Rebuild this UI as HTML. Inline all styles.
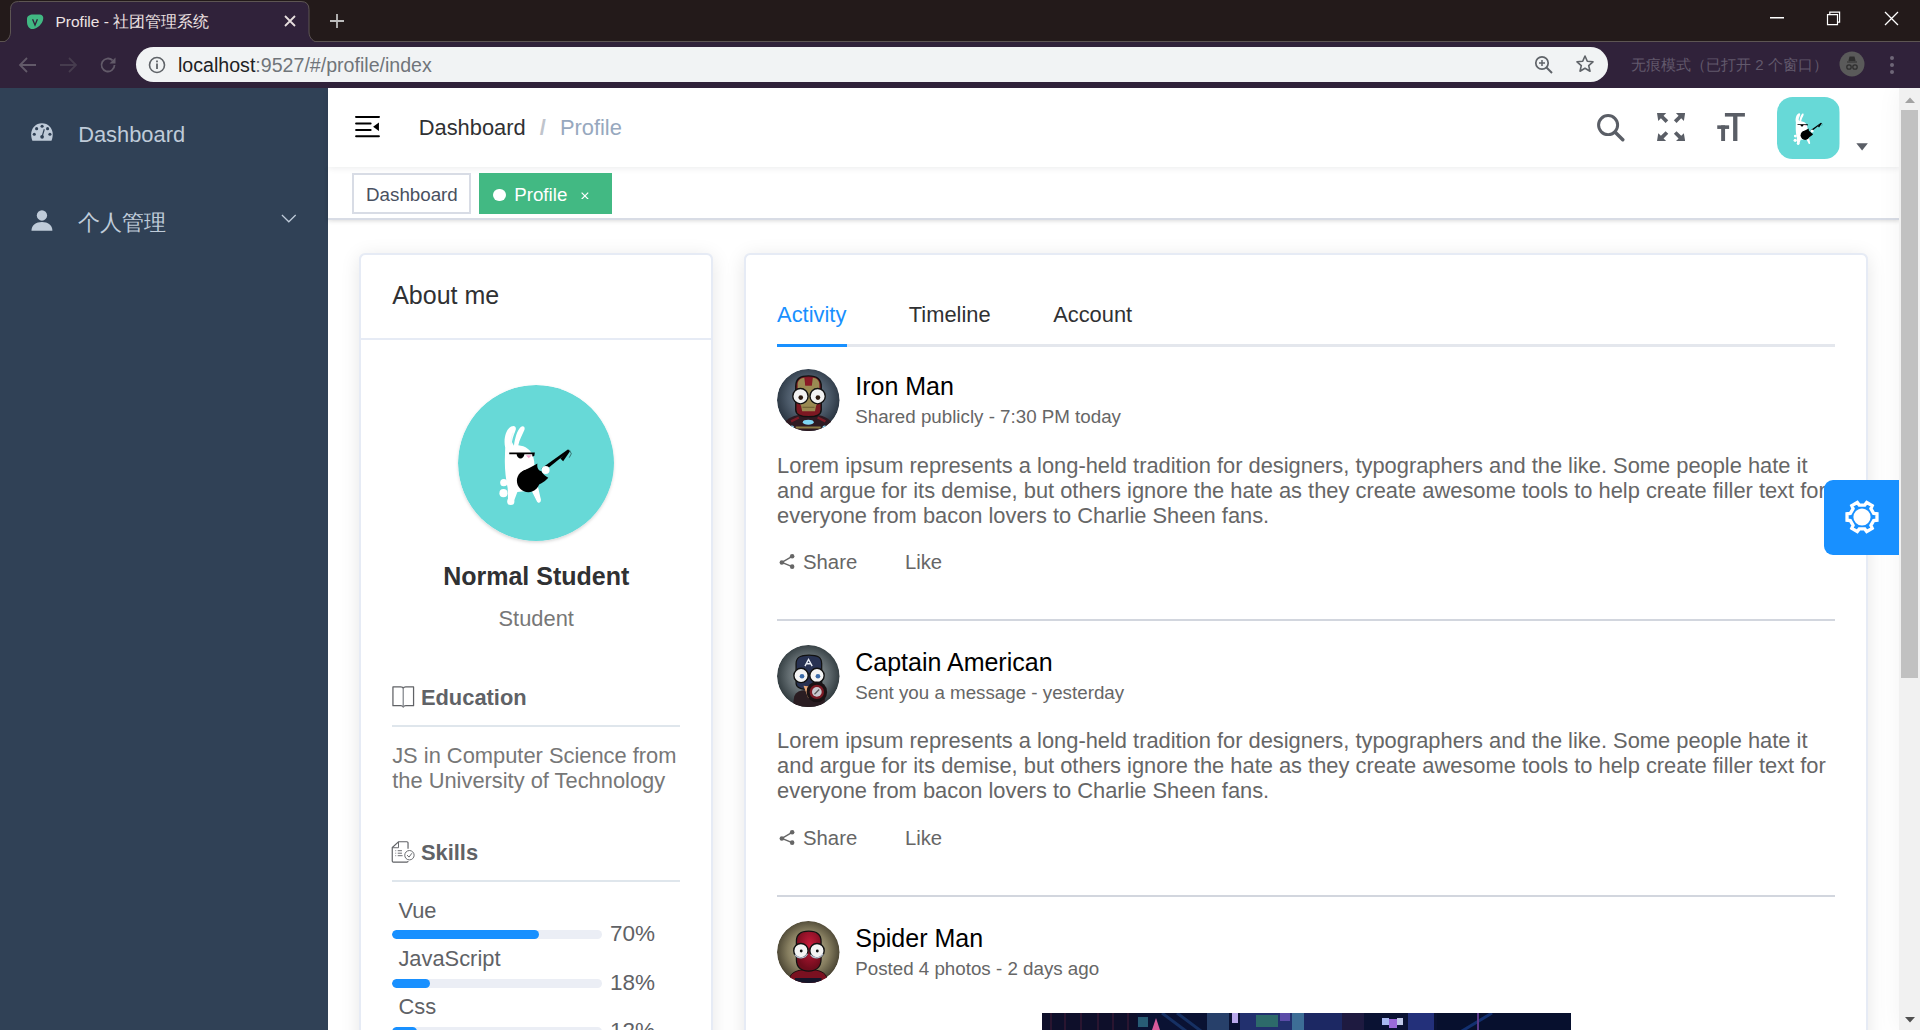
<!DOCTYPE html>
<html><head><meta charset="utf-8">
<style>
*{box-sizing:border-box;margin:0;padding:0}
html,body{width:1920px;height:1030px;overflow:hidden;background:#fff;font-family:"Liberation Sans",sans-serif}
.abs{position:absolute}
/* browser chrome */
#titlebar{position:absolute;left:0;top:0;width:1920px;height:42px;background:#231a1a;border-bottom:1px solid #5d5553}
#tab{position:absolute;left:10px;top:1px;width:298px;height:41px}
#tab .title{position:absolute;left:45.5px;top:11px;font-size:15.5px;color:#eee3e3;white-space:nowrap}
#toolbar{position:absolute;left:0;top:42px;width:1920px;height:46px;background:#30223a}
#omni{position:absolute;left:136px;top:5px;width:1472px;height:35px;background:#f1f3f4;border-radius:18px}
#omni .url{position:absolute;left:42px;top:6.5px;font-size:19.6px;color:#202124;white-space:nowrap;letter-spacing:0}
#omni .url span{color:#70757a}
#incog{position:absolute;left:1631px;top:13.5px;font-size:15px;color:#62596c;white-space:nowrap}
/* page */
#page{position:absolute;left:0;top:88px;width:1920px;height:942px;overflow:hidden;background:#fff}
#app{zoom:1.5625;width:1216px;height:603px;position:relative}
.sidebar{position:absolute;left:0;top:0;width:210px;height:100%;background:#304156}
.menu-item{position:relative;height:56px;line-height:59.6px;font-size:14px;color:#bfcbd9;padding-left:50px;white-space:nowrap}
.main{position:absolute;left:210px;top:0;right:0;height:100%}
.navbar{height:50.6px;position:relative;background:#fff;box-shadow:0 1px 4px rgba(0,21,41,.08)}
.tags{height:33.9px;background:#fff;border-bottom:1.28px solid #d8dce5;box-shadow:0 1px 3px 0 rgba(0,0,0,.12),0 0 3px 0 rgba(0,0,0,.04)}
.tag{display:inline-block;position:relative;height:26px;line-height:26px;border:1.3px solid #d8dce5;color:#495060;background:#fff;padding:0 8px;font-size:12px;margin-left:5px;margin-top:4px;vertical-align:top}
.tag:first-of-type{margin-left:15px;padding-right:7.2px}
.tag.active{background:#42b983;color:#fff;border-color:#42b983}
.tag.active::after{content:none}
.tag.active::before{content:"";background:#fff;display:inline-block;width:8px;height:8px;border-radius:50%;position:relative;margin-right:2px}
.scrollbar{position:absolute;left:1899px;top:0;width:21px;height:942px;background:#f1f1f1}

.sico{position:absolute;left:20px}
.breadcrumb{position:absolute;left:58px;top:0.6px;line-height:50px;font-size:14px;white-space:nowrap}
.bc1{color:#303133}
.bcsep{margin:0 9px;font-weight:700;color:#c0c4cc}
.bc2{color:#97a8be}
.uavatar{position:absolute;left:927.4px;top:5.7px;width:40px;height:40px;border-radius:10px;overflow:hidden}
.uavatar svg{display:block}
.tclose{display:inline-block;width:16px;height:1px;vertical-align:baseline;position:relative}
.tclose svg{position:absolute;left:5.4px;top:-5.2px}
.app-main{position:relative;padding:20px;height:519px;overflow:hidden;top:1.1px}
.col6{position:absolute;left:20px;top:20px;width:226.34px}
.col18{position:absolute;left:266.34px;top:20px;width:719.02px}
.card{border:1.28px solid #e6ebf5;background:#fff;border-radius:4px;overflow:hidden;color:#303133;box-shadow:0 2px 12px 0 rgba(0,0,0,.1);height:900px;font-size:16px}
.card-header{padding:16.8px 19.72px 18px;border-bottom:1.28px solid #e6ebf5}
.card-body{padding:20px 19.72px}
.user-profile{text-align:center}
.pan{width:100px;height:100px;margin:8.7px auto 0;border-radius:50%;overflow:hidden;box-shadow:0 1px 2px rgba(0,0,0,.15)}
.pan svg{display:block}
.user-name{padding-top:13.2px;font-weight:bold}
.user-role{padding-top:9.4px;font-size:14px;color:#777}
.user-bio{margin-top:20px;color:#606266}
.bio-section{font-size:14px;padding:15px 0;line-height:16px}
.bio-header{border-bottom:1.28px solid #dfe6ec;padding-bottom:10px;margin-bottom:10px;font-weight:bold;position:relative}
.bio-header span{padding-left:4px}
.bicon{vertical-align:-2px;position:relative;top:-1.3px}
.text-muted{color:#777}
.edu{margin-top:-0.8px;padding-bottom:0.8px;margin-bottom:-1.2px}
.progress-item{margin-bottom:0;font-size:14px}
.progress-item span{padding-left:4px}
.prog{position:relative;line-height:1;white-space:nowrap}
.prog .bar{display:inline-block;vertical-align:middle;width:100%;padding-right:50px;margin-right:-55px;box-sizing:border-box}
.prog .bar::before{content:none}
.prog .outer{}
.prog .inner{height:6px;border-radius:100px;background:#1890ff}
.prog .outer{height:6px;border-radius:100px;background:#ebeef5;overflow:hidden;position:relative}
.ptext{display:inline-block;vertical-align:middle;font-size:14.4px;color:#606266;margin-left:10px;line-height:1}
.tabs{position:relative;height:40px;margin-bottom:14px}
.tabi{display:inline-block;height:40px;line-height:40px;font-size:14px;font-weight:500;color:#303133;padding:0 20px;vertical-align:top}
.tabi:first-child{padding-left:0}
.tabi.active{color:#1890ff}
.tabline{position:absolute;left:0;right:0;bottom:0;height:2px;background:#e4e7ed}
.tabbar{position:absolute;left:0;bottom:0;height:2px;width:45px;background:#1890ff}
.post{font-size:14px;border-bottom:1.28px solid #d2d6de;margin-bottom:15px;padding-bottom:14px;color:#666;line-height:16px}
.user-block{position:relative;min-height:40px}
.img-circle{float:left;width:40px;height:40px;border-radius:50%;overflow:hidden}
.img-circle svg{display:block}
.username,.description{display:block;margin-left:50px;padding:2px 0}
.username{padding-top:3.64px}.description{padding-top:1px}
.username{font-size:16px;color:#000}
.description{font-size:12px;font-weight:500;color:#666}
.post p{margin:13px 0}
.list-inline{padding-left:0;margin:14px 0 14px -5px;list-style:none}
.list-inline li{display:inline-block;padding:0 5px;font-size:13px}
.shico{vertical-align:-1px}
.likeph{display:inline-block;width:16.9px}
.user-images{padding-top:18.6px}
.carousel{margin:0 auto;width:338.56px;height:200px;position:relative;left:0.2px}
.handle{position:absolute;left:1824px;top:392px;width:75px;height:75px;background:#1890ff;border-radius:9px 0 0 9px}
.handle svg{position:absolute;left:18px;top:17px}
.thumb{position:absolute;left:2px;top:22px;width:17px;height:568px;background:#c1c1c1}
</style></head>
<body>
<div id="titlebar">
  <svg class="abs" style="left:0;top:0" width="330" height="43" viewBox="0 0 330 43"><path d="M0 42.5C6 42.5 10.5 38 10.5 32V9.5Q10.5 1.5 18.5 1.5H301Q309 1.5 309 9.5V32C309 38 313.5 42.5 319.5 42.5" fill="#30223a" stroke="#5d5553" stroke-width="1"/></svg>
  <div id="tab">
    <svg class="abs" style="left:16px;top:12px" width="18" height="18" viewBox="0 0 18 18"><path d="M1 6C1 3 3.5 1.5 7 1.5H12.5C16.5 1.5 18 3.5 17 7C16 11 12 15 7.5 16C3.5 16.8 1 13 1 9Z" fill="#41b883"/><path d="M6.6 6.2L9 12L11.4 6.2" fill="none" stroke="#30223a" stroke-width="1.3"/></svg>
    <div class="title">Profile - 社团管理系统</div>
    <svg class="abs" style="left:273px;top:13px" width="14" height="14" viewBox="0 0 14 14"><path d="M2 2L12 12M12 2L2 12" stroke="#e6dede" stroke-width="1.8"/></svg>
  </div>
  <svg class="abs" style="left:329px;top:13px" width="16" height="16" viewBox="0 0 16 16"><path d="M8 1V15M1 8H15" stroke="#bdbdbd" stroke-width="1.8"/></svg>
  <svg class="abs" style="left:1770px;top:17px" width="14" height="2"><rect width="14" height="1.5" fill="#fff"/></svg>
  <svg class="abs" style="left:1826px;top:11px" width="16" height="16" viewBox="0 0 16 16"><path d="M1.5 3.7H11.5V13.7H1.5Z M3.8 3.7V1.2H13.6V11.2H11.5" fill="none" stroke="#fff" stroke-width="1.2"/></svg>
  <svg class="abs" style="left:1883px;top:10px" width="17" height="17" viewBox="0 0 17 17"><path d="M2 2L15 15M15 2L2 15" stroke="#fff" stroke-width="1.3"/></svg>
</div>
<div id="toolbar">
  <svg class="abs" style="left:18px;top:13px" width="20" height="20" viewBox="0 0 20 20"><path d="M18 10H3M9 3L2 10L9 17" fill="none" stroke="#625a69" stroke-width="1.8"/></svg>
  <svg class="abs" style="left:58px;top:13px" width="20" height="20" viewBox="0 0 20 20"><path d="M2 10H17M11 3L18 10L11 17" fill="none" stroke="#463c4e" stroke-width="1.8"/></svg>
  <svg class="abs" style="left:98px;top:13px" width="20" height="20" viewBox="0 0 20 20"><path d="M16.5 10A6.5 6.5 0 1 1 14.6 5.4" fill="none" stroke="#625a69" stroke-width="1.8"/><path d="M17.5 2.5V8.5H11.5Z" fill="#625a69"/></svg>
  <div id="omni">
    <svg class="abs" style="left:12px;top:9px" width="18" height="18" viewBox="0 0 18 18"><circle cx="9" cy="9" r="7.5" fill="none" stroke="#5f6368" stroke-width="1.6"/><rect x="8.1" y="7.5" width="1.8" height="5.5" fill="#5f6368"/><rect x="8.1" y="4.5" width="1.8" height="1.8" fill="#5f6368"/></svg>
    <div class="url">localhost<span>:9527/#/profile/index</span></div>
    <svg class="abs" style="left:1398px;top:8px" width="20" height="20" viewBox="0 0 20 20"><circle cx="8" cy="8" r="6.2" fill="none" stroke="#5f6368" stroke-width="1.7"/><path d="M12.5 12.5L18 18" stroke="#5f6368" stroke-width="2"/><path d="M8 5V11M5 8H11" stroke="#5f6368" stroke-width="1.5"/></svg>
    <svg class="abs" style="left:1439px;top:7px" width="20" height="20" viewBox="0 0 20 20"><path d="M10 2L12.3 7.3L18 7.8L13.7 11.6L15 17.2L10 14.2L5 17.2L6.3 11.6L2 7.8L7.7 7.3Z" fill="none" stroke="#5f6368" stroke-width="1.6" stroke-linejoin="round"/></svg>
  </div>
  <div id="incog">无痕模式（已打开 2 个窗口）</div>
  <svg class="abs" style="left:1839px;top:9px" width="26" height="26" viewBox="0 0 26 26"><circle cx="13" cy="13" r="12.5" fill="#5a5a5a"/><path d="M8 11H18M10 10L11 6H15L16 10" fill="#2f2f2f" stroke="#2f2f2f" stroke-width="1.2"/><circle cx="10" cy="16" r="2.2" fill="none" stroke="#2f2f2f" stroke-width="1.3"/><circle cx="16" cy="16" r="2.2" fill="none" stroke="#2f2f2f" stroke-width="1.3"/></svg>
  <svg class="abs" style="left:1889px;top:13px" width="6" height="20" viewBox="0 0 6 20"><circle cx="3" cy="3" r="2" fill="#6e6677"/><circle cx="3" cy="10" r="2" fill="#6e6677"/><circle cx="3" cy="17" r="2" fill="#6e6677"/></svg>
</div>
<div id="page">
 <div id="app">
  <div class="sidebar">
    <div class="menu-item"><svg class="sico" style="top:22.5px" width="14" height="12" viewBox="0 0 14 12"><path d="M7 0.2C10.9 0.2 13.9 3.3 13.9 7.2C13.9 8.8 13.6 10.1 13.1 11.3H0.9C0.4 10.1 0.1 8.8 0.1 7.2C0.1 3.3 3.1 0.2 7 0.2Z" fill="#bfcbd9"/><g fill="#304156"><circle cx="7.1" cy="2.1" r="1"/><circle cx="3.6" cy="3.6" r="1"/><circle cx="10.6" cy="3.6" r="1"/><circle cx="2.1" cy="7.2" r="1"/><circle cx="12.1" cy="7.2" r="1"/><circle cx="7.1" cy="8.8" r="1.2"/></g><path d="M8.5 4L7.1 8.8" stroke="#304156" stroke-width="0.75"/></svg>Dashboard</div>
    <div class="menu-item"><svg class="sico" style="top:22px" width="14" height="14" viewBox="0 0 14 14"><circle cx="7" cy="3.5" r="3.3" fill="#bfcbd9"/><path d="M0.3 13.2C0.3 9.6 3.2 7.6 7 7.6C10.8 7.6 13.7 9.6 13.7 13.2Z" fill="#bfcbd9"/></svg>个人管理<svg class="abs" style="left:180px;top:24.4px" width="10" height="6" viewBox="0 0 10 6"><path d="M0.6 0.6L5 5L9.4 0.6" fill="none" stroke="#bfcbd9" stroke-width="0.8"/></svg></div>
  </div>
  <div class="main">
    <div class="navbar">
      <svg class="abs" style="left:17.4px;top:18.1px" width="16" height="14" viewBox="0 0 16 14"><path d="M0.7 0.6H15.3M0.7 4.85H10M0.7 8.9H10M0.7 12.9H15.3" stroke="#000" stroke-width="1.3" stroke-linecap="round"/><path d="M15.3 4.1V9.6L11.6 6.9Z" fill="#000"/></svg>
      <div class="breadcrumb"><span class="bc1">Dashboard</span><span class="bcsep">/</span><span class="bc2">Profile</span></div>
      <svg class="abs" style="left:812px;top:16.7px" width="18" height="18" viewBox="0 0 18 18"><circle cx="7.1" cy="7.1" r="6.1" fill="none" stroke="#5a5e66" stroke-width="1.9"/><path d="M11.5 11.5L16.5 16.5" stroke="#5a5e66" stroke-width="2.2" stroke-linecap="round"/></svg>
      <svg class="abs" style="left:850.5px;top:16px" width="18" height="18" viewBox="0 0 18 18" fill="#5a5e66"><path d="M0 0H5.9L4.2 1.7L7.2 4.7L5.5 6.4L2.5 3.4L0.8 5.1Z"/><path d="M18 0H12.1L13.8 1.7L10.8 4.7L12.5 6.4L15.5 3.4L17.2 5.1Z"/><path d="M0 18H5.9L4.2 16.3L7.2 13.3L5.5 11.6L2.5 14.6L0.8 12.9Z"/><path d="M18 18H12.1L13.8 16.3L10.8 13.3L12.5 11.6L15.5 14.6L17.2 12.9Z"/></svg>
      <svg class="abs" style="left:888.5px;top:16px" width="19" height="18" viewBox="0 0 19 18" fill="#5a5e66"><rect x="5.7" y="0" width="12.8" height="2.3"/><rect x="10.95" y="0" width="2.75" height="18"/><rect x="0.8" y="7.9" width="7.6" height="2.3"/><rect x="3.3" y="7.9" width="2.5" height="10.1"/></svg>
      <div class="uavatar"><svg width="40" height="40" viewBox="0 0 100 100"><rect width="100" height="100" fill="#67d9d7"/><g><path d="M30.2 40C29 35 30.5 28.5 34 26.6C36 25.6 37.3 26.5 37 28.5C36.5 30.5 35 33 34.5 36.5L35.8 38.8C36.5 34 37.8 29 40 27C41.6 25.7 43.3 26.6 42.4 29C41.2 32 39.2 35 38.6 38.6C43 39 47 41.5 48.2 46C49 49 49.2 52 48.6 55L50.4 62C51.2 65 52.4 70 53 73C53.4 75.5 51.2 76.3 50.3 74L47 67.5L38 68.5L35.6 74.8C34.6 76.6 31.8 76 32 73.5L31.8 66C30.5 60 29.8 53 30 47Z" fill="#fff"/><path d="M35.3 30.5C34.2 33 33.6 35.5 34 38" fill="none" stroke="#e6f4f4" stroke-width="0.5"/><circle cx="29.3" cy="62.5" r="2.3" fill="#fff"/><circle cx="29.1" cy="69.2" r="2.6" fill="#fff"/><circle cx="33.8" cy="74.5" r="2.3" fill="#fff"/><path d="M32.8 43.2H49.2L48.8 45.5L47.6 45.8L47.5 44.3H32.8Z" fill="#000"/><path d="M37.5 44.2H42.5C42.3 46.2 41.2 47 40 47C38.8 47 37.7 46.2 37.5 44.2Z" fill="#000"/><path d="M43.4 45H47.2L45.3 46.9Z" fill="#f7a6cd"/><path d="M53.5 53.3L70.3 41.2L71.2 42.2L55 55.3Z" fill="#000"/><path d="M65.5 47L70.6 41.2L71.6 42.5L67.3 48.8Z" fill="#000"/><path d="M71.3 41.5L72.5 44L71.2 46.5" fill="none" stroke="#000" stroke-width="0.3"/><circle cx="45" cy="61.3" r="7.3" fill="#000"/><path d="M41 55.5C44.5 53.5 48 52 50.8 50.2C50.5 52.5 51 54.5 53.4 55.2C54.3 56.8 56 58.5 57.8 59.4C55 62.5 52 64 48.5 65Z" fill="#000"/><circle cx="56.1" cy="54.4" r="2.5" fill="#fff"/></g></svg></div>
      <svg class="abs" style="left:978px;top:35px" width="8" height="5" viewBox="0 0 8 5"><path d="M0.2 0.2H7.6L3.9 4.8Z" fill="#5a5e66"/></svg>
    </div>
    <div class="tags"><span class="tag">Dashboard</span><span class="tag active"> Profile <span class="tclose"><svg width="5" height="5" viewBox="0 0 5 5"><path d="M0.4 0.4L4.6 4.6M4.6 0.4L0.4 4.6" stroke="#fff" stroke-width="0.75"/></svg></span></span></div>
    <div class="app-main">
      <div class="col6">
        <div class="card">
          <div class="card-header">About me</div>
          <div class="card-body">
            <div class="user-profile">
              <div class="pan"><svg width="100" height="100" viewBox="0 0 100 100"><circle cx="50" cy="50" r="50" fill="#67d9d7"/><path d="M30.2 40C29 35 30.5 28.5 34 26.6C36 25.6 37.3 26.5 37 28.5C36.5 30.5 35 33 34.5 36.5L35.8 38.8C36.5 34 37.8 29 40 27C41.6 25.7 43.3 26.6 42.4 29C41.2 32 39.2 35 38.6 38.6C43 39 47 41.5 48.2 46C49 49 49.2 52 48.6 55L50.4 62C51.2 65 52.4 70 53 73C53.4 75.5 51.2 76.3 50.3 74L47 67.5L38 68.5L35.6 74.8C34.6 76.6 31.8 76 32 73.5L31.8 66C30.5 60 29.8 53 30 47Z" fill="#fff"/><path d="M35.3 30.5C34.2 33 33.6 35.5 34 38" fill="none" stroke="#e6f4f4" stroke-width="0.5"/><circle cx="29.3" cy="62.5" r="2.3" fill="#fff"/><circle cx="29.1" cy="69.2" r="2.6" fill="#fff"/><circle cx="33.8" cy="74.5" r="2.3" fill="#fff"/><path d="M32.8 43.2H49.2L48.8 45.5L47.6 45.8L47.5 44.3H32.8Z" fill="#000"/><path d="M37.5 44.2H42.5C42.3 46.2 41.2 47 40 47C38.8 47 37.7 46.2 37.5 44.2Z" fill="#000"/><path d="M43.4 45H47.2L45.3 46.9Z" fill="#f7a6cd"/><path d="M53.5 53.3L70.3 41.2L71.2 42.2L55 55.3Z" fill="#000"/><path d="M65.5 47L70.6 41.2L71.6 42.5L67.3 48.8Z" fill="#000"/><path d="M71.3 41.5L72.5 44L71.2 46.5" fill="none" stroke="#000" stroke-width="0.3"/><circle cx="45" cy="61.3" r="7.3" fill="#000"/><path d="M41 55.5C44.5 53.5 48 52 50.8 50.2C50.5 52.5 51 54.5 53.4 55.2C54.3 56.8 56 58.5 57.8 59.4C55 62.5 52 64 48.5 65Z" fill="#000"/><circle cx="56.1" cy="54.4" r="2.5" fill="#fff"/></svg></div>
              <div class="user-name">Normal Student</div>
              <div class="user-role">Student</div>
            </div>
            <div class="user-bio">
              <div class="bio-section" style="padding-top:14.36px">
                <div class="bio-header" style="padding-bottom:9.36px;margin-bottom:11.28px"><svg class="bicon" style="top:-0.4px" width="14.4" height="14" viewBox="0 0 14.4 14"><path d="M0.6 0.6H5.6C6.5 0.6 7.1 1 7.2 1.6C7.3 1 7.9 0.6 8.8 0.6H13.8V12.6H8.8C7.9 12.6 7.4 13 7.2 13.5C7 13 6.5 12.6 5.6 12.6H0.6Z" fill="none" stroke="#606266" stroke-width="0.8" stroke-linejoin="round"/><path d="M7.2 1.6V13.3" stroke="#909399" stroke-width="0.9"/></svg><span>Education</span></div>
                <div class="text-muted edu">JS in Computer Science from the University of Technology</div>
              </div>
              <div class="bio-section">
                <div class="bio-header" style="margin-bottom:9.7px"><svg class="bicon" style="margin-left:-0.6px;top:0.2px" width="15" height="14" viewBox="0 0 15 14"><path d="M10.9 5V1.2C10.9 0.8 10.6 0.5 10.2 0.5H4.8L0.8 4.2V12.8C0.8 13.2 1.1 13.5 1.5 13.5H10.2C10.6 13.5 10.9 13.2 10.9 12.8" fill="none" stroke="#606266" stroke-width="0.75"/><path d="M4.8 0.6V4.3H0.9" fill="none" stroke="#606266" stroke-width="0.6"/><path d="M2.8 6.2H3.3M2.8 7.8H3.3M2.8 9.4H3.3M4.3 6.2H7M4.3 7.8H7M4.3 9.4H7.4" stroke="#606266" stroke-width="0.6"/><circle cx="11.8" cy="9.1" r="3" fill="#fff" stroke="#606266" stroke-width="0.6"/><path d="M10.3 9L11.5 10.3L13.4 7.8" fill="none" stroke="#606266" stroke-width="0.6"/></svg><span>Skills</span></div>
                <div class="progress-item"><span>Vue</span><div class="prog"><div class="bar"><div class="outer"><div class="inner" style="width:70%"></div></div></div><div class="ptext">70%</div></div></div>
                <div class="progress-item"><span>JavaScript</span><div class="prog"><div class="bar"><div class="outer"><div class="inner" style="width:18%"></div></div></div><div class="ptext">18%</div></div></div>
                <div class="progress-item"><span>Css</span><div class="prog"><div class="bar"><div class="outer"><div class="inner" style="width:12%"></div></div></div><div class="ptext">12%</div></div></div>
              </div>
            </div>
          </div>
        </div>
      </div>
      <div class="col18">
        <div class="card">
          <div class="card-body" style="padding-top:18.8px">
            <div class="tabs"><span class="tabi active">Activity</span><span class="tabi">Timeline</span><span class="tabi">Account</span><div class="tabline"></div><div class="tabbar"></div></div>
            <div class="post">
              <div class="user-block"><div class="img-circle"><svg width="40" height="40" viewBox="0 0 40 40"><defs><radialGradient id="gi" cx="50%" cy="45%" r="55%"><stop offset="0" stop-color="#7a8a9b"/><stop offset="0.6" stop-color="#4c5a69"/><stop offset="1" stop-color="#26313d"/></radialGradient></defs><circle cx="20" cy="20" r="20" fill="url(#gi)"/><path d="M5 34C8 30.5 13 29 20 29C27 29 32 30.5 35 34L33 40H7Z" fill="#2e1a22"/><path d="M9 33.5L14 31M31 33.5L26 31" stroke="#7a1a26" stroke-width="1.5"/><path d="M12 37.5H28" stroke="#8a7a44" stroke-width="1.3"/><ellipse cx="20" cy="34" rx="3.5" ry="1.6" fill="#7fd6f5"/><circle cx="9.5" cy="37.5" r="1.4" fill="#8fe0ff"/><circle cx="30.5" cy="37.5" r="1.4" fill="#8fe0ff"/><path d="M12 11C12 6 15 4.4 20.2 4.4C25.4 4.4 28.3 6 28.3 11V26C28.3 29 25.5 30.5 20.2 30.5C15 30.5 12 29 12 26Z" fill="#7c1822" stroke="#111" stroke-width="0.9"/><path d="M13.2 9.8C13.2 7 15.5 5.8 17.5 5.6L18.1 10.5H22.3L22.9 5.6C25 5.8 27.1 7 27.1 9.8V20.5L25 23.5L24.3 27H16.1L15.4 23.5L13.2 20.5Z" fill="#9a8a52"/><rect x="18.1" y="5.5" width="4.2" height="5" fill="#8a1a26"/><path d="M16.3 24.5H24" stroke="#6a5a30" stroke-width="0.6"/><circle cx="15" cy="17.4" r="4.9" fill="#f2f2f2" stroke="#111" stroke-width="0.9"/><circle cx="26" cy="17.4" r="4.9" fill="#f2f2f2" stroke="#111" stroke-width="0.9"/><circle cx="15.2" cy="18.3" r="1.5" fill="#2b1a10"/><circle cx="26.2" cy="18.3" r="1.5" fill="#2b1a10"/></svg></div><span class="username">Iron Man</span><span class="description">Shared publicly - 7:30 PM today</span></div>
              <p>Lorem ipsum represents a long-held tradition for designers, typographers and the like. Some people hate it and argue for its demise, but others ignore the hate as they create awesome tools to help create filler text for everyone from bacon lovers to Charlie Sheen fans.</p>
              <ul class="list-inline"><li><svg class="shico" width="13" height="13" viewBox="0 0 13 13"><path d="M9.7 3.4L3.1 7.3L9.7 10" fill="none" stroke="#666" stroke-width="0.9"/><circle cx="9.7" cy="3.4" r="1.45" fill="#666"/><circle cx="3.1" cy="7.3" r="1.45" fill="#666"/><circle cx="9.7" cy="10" r="1.45" fill="#666"/></svg> Share</li><li><i class="likeph"></i> Like</li></ul>
            </div>
            <div class="post">
              <div class="user-block"><div class="img-circle"><svg width="40" height="40" viewBox="0 0 40 40"><defs><radialGradient id="gc" cx="50%" cy="48%" r="55%"><stop offset="0" stop-color="#a9b1b3"/><stop offset="0.6" stop-color="#5f696d"/><stop offset="1" stop-color="#283236"/></radialGradient></defs><circle cx="20" cy="20" r="20" fill="url(#gc)"/><path d="M10 40L11 33C12 30 15 29 18 29H24L31 33L30 40Z" fill="#2a1d22"/><path d="M12.2 12C12.2 7.5 15.5 6.5 20.5 6.5C25.5 6.5 28.6 7.5 28.6 12V24.5C28.6 27 26 28.5 20.5 28.5C15 28.5 12.2 27 12.2 24.5Z" fill="#283252" stroke="#111" stroke-width="0.8"/><path d="M17.9 13.5L20.2 9.3L22.5 13.5M18.8 12H21.6" fill="none" stroke="#e8ecf4" stroke-width="0.9"/><path d="M17 26L20 34L25 27Z" fill="#e8a878"/><circle cx="15.4" cy="19.5" r="4.6" fill="#f4f4f4" stroke="#111" stroke-width="0.9"/><circle cx="25.6" cy="19.5" r="4.6" fill="#f4f4f4" stroke="#111" stroke-width="0.9"/><circle cx="16" cy="20" r="1.5" fill="#3a6aa8"/><circle cx="26.2" cy="20" r="1.5" fill="#3a6aa8"/><circle cx="25.5" cy="30" r="6.6" fill="#1a1214"/><circle cx="25.5" cy="30" r="4.6" fill="#7a1a24"/><circle cx="25.5" cy="30" r="3.1" fill="#c9c9cf"/><path d="M24 31.5L27 28.5" stroke="#555" stroke-width="0.8"/></svg></div><span class="username">Captain American</span><span class="description">Sent you a message - yesterday</span></div>
              <p>Lorem ipsum represents a long-held tradition for designers, typographers and the like. Some people hate it and argue for its demise, but others ignore the hate as they create awesome tools to help create filler text for everyone from bacon lovers to Charlie Sheen fans.</p>
              <ul class="list-inline"><li><svg class="shico" width="13" height="13" viewBox="0 0 13 13"><path d="M9.7 3.4L3.1 7.3L9.7 10" fill="none" stroke="#666" stroke-width="0.9"/><circle cx="9.7" cy="3.4" r="1.45" fill="#666"/><circle cx="3.1" cy="7.3" r="1.45" fill="#666"/><circle cx="9.7" cy="10" r="1.45" fill="#666"/></svg> Share</li><li><i class="likeph"></i> Like</li></ul>
            </div>
            <div class="post">
              <div class="user-block"><div class="img-circle"><svg width="40" height="40" viewBox="0 0 40 40"><defs><radialGradient id="gs" cx="50%" cy="48%" r="55%"><stop offset="0" stop-color="#cfc7a6"/><stop offset="0.6" stop-color="#857d5f"/><stop offset="1" stop-color="#3e392a"/></radialGradient><radialGradient id="gh" cx="55%" cy="35%" r="60%"><stop offset="0" stop-color="#c81a3a"/><stop offset="1" stop-color="#6e0c1c"/></radialGradient></defs><circle cx="20" cy="20" r="20" fill="url(#gs)"/><path d="M8 37C8.5 33 13 31 20 31C27 31 31.5 33 32 37L30 40H10Z" fill="#7a1020" stroke="#1a0a0e" stroke-width="0.6"/><path d="M11.5 36.5H28.5V40H11.5Z" fill="#15152a"/><path d="M12.4 13C12.4 8 15.5 6.5 20.3 6.5C25 6.5 28.2 8 28.2 13V24.5C28.2 29.5 25 32 20.3 32C15.5 32 12.4 29.5 12.4 24.5Z" fill="url(#gh)" stroke="#111" stroke-width="0.8"/><circle cx="15.3" cy="19" r="4.6" fill="#f4f4f4" stroke="#111" stroke-width="0.9"/><circle cx="25.6" cy="19" r="4.6" fill="#f4f4f4" stroke="#111" stroke-width="0.9"/><path d="M11.5 21.5A4.6 4.6 0 0 0 19.5 21M21.5 21.5A4.6 4.6 0 0 0 29.5 21" fill="none" stroke="#b8c0d0" stroke-width="0.8"/><circle cx="15.5" cy="19.2" r="0.9" fill="#111"/><circle cx="25.8" cy="19.2" r="0.9" fill="#111"/></svg></div><span class="username">Spider Man</span><span class="description">Posted 4 photos - 2 days ago</span></div>
              <div class="user-images"><div class="carousel"><svg width="338.56" height="200" viewBox="0 0 529 312" preserveAspectRatio="none" style="display:block"><rect width="529" height="312" fill="#0a1233"/><rect x="0" y="0" width="95" height="312" fill="#0e0f2a"/><g fill="#2a1530"><rect x="8" y="0" width="2" height="30"/><rect x="22" y="0" width="2" height="30"/><rect x="38" y="0" width="2" height="30"/><rect x="55" y="0" width="2" height="30"/><rect x="70" y="0" width="2" height="30"/><rect x="85" y="0" width="2" height="30"/></g><rect x="96" y="4" width="10" height="10" fill="#2f6f86" opacity="0.8"/><path d="M110 17L114 5L118 17Z" fill="#d85a9a"/><path d="M120 0L160 30M135 0L175 30" stroke="#163063" stroke-width="3"/><rect x="165" y="0" width="22" height="20" fill="#27406a"/><rect x="190" y="0" width="6" height="10" fill="#b9a8ea"/><rect x="198" y="0" width="52" height="30" fill="#22306e"/><rect x="214" y="2" width="22" height="12" fill="#2d6a6a"/><rect x="238" y="0" width="10" height="8" fill="#5b4ca8"/><rect x="250" y="0" width="12" height="30" fill="#3d6e96"/><rect x="262" y="0" width="60" height="30" fill="#1c2863"/><rect x="300" y="0" width="22" height="30" fill="#1e1a40"/><rect x="340" y="5" width="7" height="7" fill="#a8b8f0"/><rect x="347" y="6" width="8" height="9" fill="#9a6ad8"/><rect x="355" y="5" width="6" height="7" fill="#c0c8e8"/><rect x="366" y="0" width="26" height="30" fill="#23307a"/><rect x="395" y="0" width="134" height="30" fill="#07102e"/><path d="M400 30L450 0" stroke="#123070" stroke-width="3"/><rect x="435" y="0" width="2" height="30" fill="#5a3a8a"/></svg></div></div>
            </div>
          </div>
        </div>
      </div>
    </div>
  </div>
  <div style="position:absolute;left:1215.36px;top:0;width:260px;height:603px;background:#fff;box-shadow:0 0 15px 0 rgba(0,0,0,.05)"></div>
 </div>
 <div class="handle"><svg width="40" height="40" viewBox="0 0 40 40"><path d="M31.67 16.43 L34.97 16.82 L34.97 23.18 L31.67 23.57 L28.92 28.32 L30.24 31.37 L24.73 34.55 L22.74 31.89 L17.26 31.89 L15.27 34.55 L9.76 31.37 L11.08 28.32 L8.33 23.57 L5.03 23.18 L5.03 16.82 L8.33 16.43 L11.08 11.68 L9.76 8.63 L15.27 5.45 L17.26 8.11 L22.74 8.11 L24.73 5.45 L30.24 8.63 L28.92 11.68Z" fill="none" stroke="#fff" stroke-width="3.3" stroke-linejoin="miter"/><circle cx="20" cy="20" r="8.6" fill="#fff"/></svg></div>
 <div class="scrollbar"><svg class="abs" style="left:5.5px;top:9px" width="10" height="6" viewBox="0 0 10 6"><path d="M0 6L5 0.5L10 6Z" fill="#a3a3a3"/></svg><div class="thumb"></div><svg class="abs" style="left:5.5px;top:929px" width="10" height="6" viewBox="0 0 10 6"><path d="M0 0L5 5.5L10 0Z" fill="#505050"/></svg></div>
</div>
</body></html>
